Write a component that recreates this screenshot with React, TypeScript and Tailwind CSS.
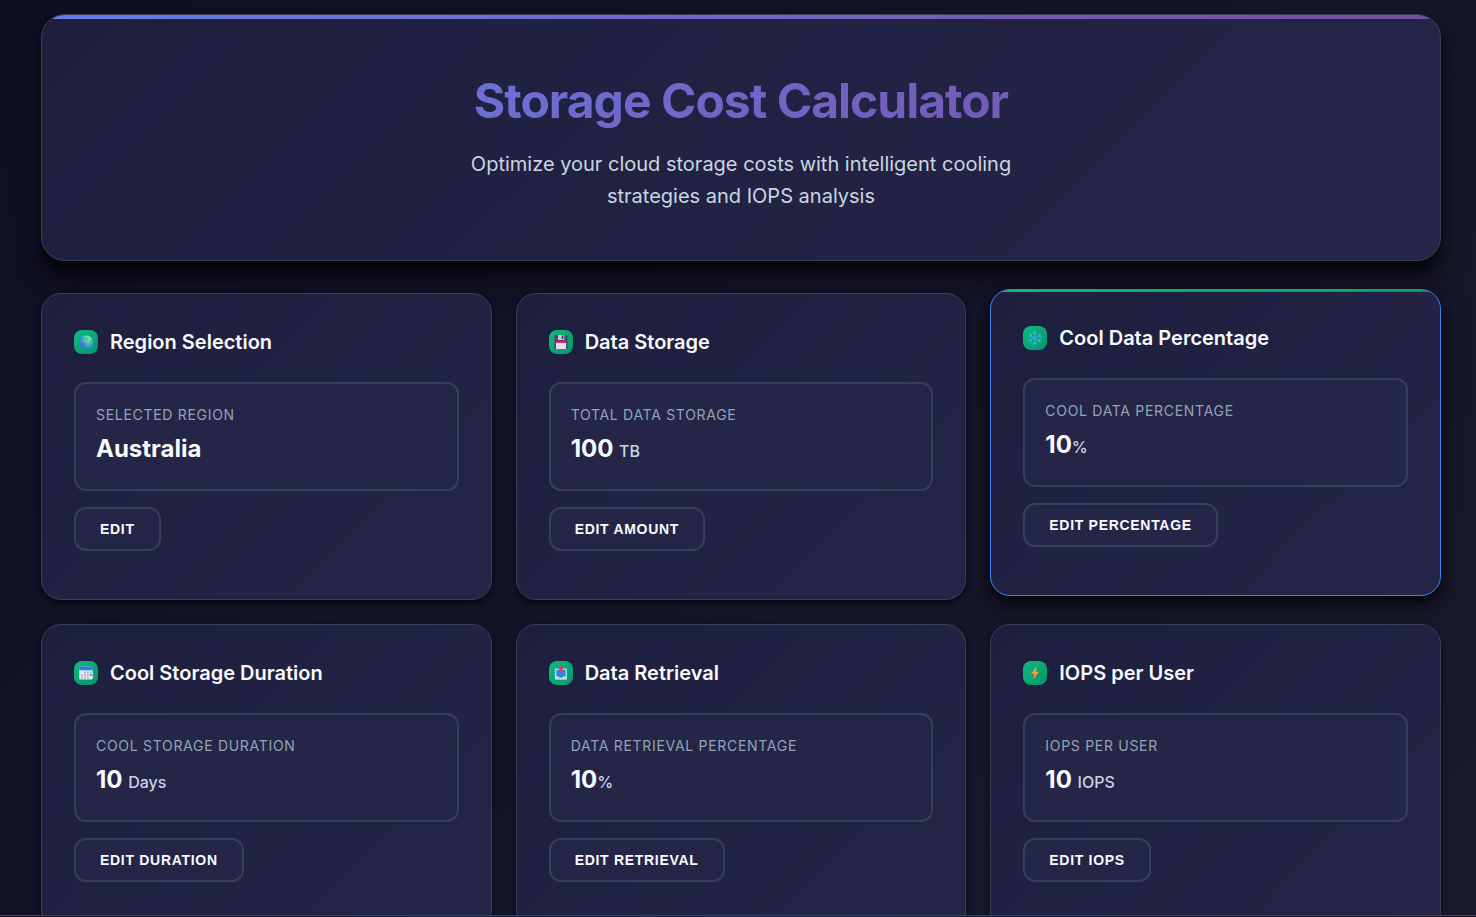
import React from "react";

type IconName = "globe" | "floppy" | "snow" | "calendar" | "outbox" | "bolt";

type CardData = {
  title: string;
  icon: IconName;
  label: string;
  value: string;
  unit?: string;
  spaced?: boolean;
  action: string;
  active?: boolean;
};

const cards: CardData[] = [
  { title: "Region Selection", icon: "globe", label: "Selected Region", value: "Australia", action: "Edit" },
  { title: "Data Storage", icon: "floppy", label: "Total Data Storage", value: "100", unit: "TB", spaced: true, action: "Edit Amount" },
  { title: "Cool Data Percentage", icon: "snow", label: "Cool Data Percentage", value: "10", unit: "%", action: "Edit Percentage", active: true },
  { title: "Cool Storage Duration", icon: "calendar", label: "Cool Storage Duration", value: "10", unit: "Days", spaced: true, action: "Edit Duration" },
  { title: "Data Retrieval", icon: "outbox", label: "Data Retrieval Percentage", value: "10", unit: "%", action: "Edit Retrieval" },
  { title: "IOPS per User", icon: "bolt", label: "IOPS per User", value: "10", unit: "IOPS", spaced: true, action: "Edit IOPS" },
];

function Glyph({ name }: { name: IconName }) {
  return (
    <svg viewBox="0 0 16 16" className="size-4" aria-hidden="true">
      {name === "globe" && (
        <>
          <defs>
            <linearGradient id="sea" x1="1" y1="0" x2="0" y2="1">
              <stop offset="0" stopColor="#38c5f0" />
              <stop offset="1" stopColor="#4560d8" />
            </linearGradient>
            <linearGradient id="land" x1="1" y1="0" x2="0" y2="1">
              <stop offset="0" stopColor="#7dfba2" />
              <stop offset="1" stopColor="#35a56e" />
            </linearGradient>
          </defs>
          <circle cx="8" cy="8" r="7" fill="url(#sea)" />
          <path d="M4.5 3.4 6.4 2.2l2.4-.4 2.2.5L13.3 4l.8 2.6-1.5-.5-.9 1.2 1 .8-1.2 1.3-.8 2.2-1.4 1.2-1.2-1.3.2-1.8-1.2-1-1.8.1-1.4-1.6.7-1.8 1.8-.8z" fill="url(#land)" />
          <path d="m6.5 4.6 1.8-.7 1.6.8-.7.8-1.6-.2z" fill="#3ba9d8" />
        </>
      )}
      {name === "floppy" && (
        <>
          <path d="M2 1h11l1.5 1.5V15H1.5V1.5z" fill="#56406e" />
          <path d="M5 1h6.3v5H5z" fill="#c9c5d8" />
          <path d="M8.8 1.6h1.5v3.5H8.8z" fill="#332c50" />
          <path d="M3 8h10v7H3z" fill="#e4e0ef" />
          <path d="M3 7.5h10V9H3z" fill="#f42f55" />
        </>
      )}
      {name === "snow" && (
        <g fill="none" stroke="#3cb0f2" strokeWidth="1.05" strokeLinecap="round" strokeLinejoin="round">
          <path d="M8 1.3v13.4M2.2 4.65l11.6 6.7M13.8 4.65l-11.6 6.7" />
          <path d="M6.2 2.2 8 4l1.8-1.8M6.2 13.8 8 12l1.8 1.8M2 6.8l2.5-.7-.7-2.5M14 9.2l-2.5.7.7 2.5M2 9.2l2.5.7-.7 2.5M14 6.8l-2.5-.7.7-2.5" />
        </g>
      )}
      {name === "calendar" && (
        <>
          <rect x="1.2" y="1.5" width="13.6" height="13" rx="1.5" fill="#e6e7ef" />
          <path d="M1.2 5.2V3q0-1.5 1.5-1.5h10.6q1.5 0 1.5 1.5v2.2z" fill="#2583e0" />
          <g fill="#a3afc0">
            <path d="M6 6.5h2v1.7H6zM9 6.5h1.8v1.7H9zM12 6.5h1.6v1.7H12zM3 9.2h2v1.6H3zM6 9.2h2v1.6H6zM9 9.2h1.8v1.6H9zM3 11.8h2v1.6H3zM6 11.8h2v1.6H6zM9 11.8h1.8v1.6H9z" />
          </g>
          <path d="M11.8 9.2h2v1.6h-2z" fill="#2485e0" />
        </>
      )}
      {name === "outbox" && (
        <>
          <path d="M3 3.5h10q.9 0 .9 1v9q0 1.3-1.3 1.3H3.2q-1.3 0-1.3-1.3v-9q0-1 1.1-1z" fill="#ccd5e4" />
          <path d="M3.4 4.8h9.2v6.4h-2l-1 1.3H6.3l-1-1.3H3.4z" fill="#248be0" />
          <path d="M8 .6 10.8 4H9.3v3.4H6.7V4H5.2z" fill="#e53863" />
        </>
      )}
      {name === "bolt" && (
        <>
          <defs>
            <linearGradient id="spark" x1="0" y1="0" x2="0" y2="1">
              <stop offset="0" stopColor="#ff8a50" />
              <stop offset=".5" stopColor="#ffa046" />
              <stop offset="1" stopColor="#f0604a" />
            </linearGradient>
          </defs>
          <path d="M9.8 1 4 8.8h3.2L5.8 15.2 12 6.8H8.8z" fill="url(#spark)" />
        </>
      )}
    </svg>
  );
}

function SettingCard({ card }: { card: CardData }) {
  return (
    <section
      className={
        card.active
          ? "relative -translate-y-1 overflow-hidden rounded-[20px] border border-[#3b82f6] bg-linear-135 from-[#1e1e3f] to-[#252547] px-8 pt-8 pb-12 shadow-[0_10px_25px_rgba(0,0,0,0.5),0_4px_10px_rgba(0,0,0,0.6)]"
          : "relative overflow-hidden rounded-[20px] border border-[#334155] bg-linear-135 from-[#1e1e3f] to-[#252547] px-8 pt-8 pb-12 shadow-[0_4px_6px_rgba(0,0,0,0.4),0_2px_4px_rgba(0,0,0,0.3)]"
      }
    >
      {card.active && <div className="absolute inset-x-0 top-0 h-0.5 bg-linear-135 from-[#10b981] to-[#059669]" />}
      <h2 className="mb-6 flex items-center gap-3 text-xl leading-8 font-semibold text-[#f8fafc]">
        <span className="flex size-6 shrink-0 items-center justify-center rounded-lg bg-linear-135 from-[#10b981] to-[#059669]">
          <Glyph name={card.icon} />
        </span>
        {card.title}
      </h2>
      <div className="mb-4 rounded-xl border-2 border-[#334155] bg-[#252547] px-5 pt-5 pb-[26px]">
        <div className="mb-2 text-sm leading-[22px] tracking-wider text-[#94a3b8] uppercase">{card.label}</div>
        <div className="text-2xl leading-[29px] font-bold text-[#f8fafc]">
          {card.value}
          {card.spaced && " "}
          {card.unit && <span className="text-base leading-none font-medium text-[#cbd5e1]">{card.unit}</span>}
        </div>
      </div>
      <button
        type="button"
        className="flex h-11 cursor-pointer items-center rounded-xl border-2 border-[#334155] bg-[#252547] px-6 font-['Liberation_Sans',sans-serif] text-sm font-semibold tracking-wider text-[#f8fafc] uppercase"
      >
        {card.action}
      </button>
    </section>
  );
}

export default function App() {
  return (
    <div className="relative h-screen overflow-hidden bg-linear-135 from-[#0f0f23] to-[#1a1a2e] font-[Inter,sans-serif] text-[#f8fafc]">
      <main className="mx-auto max-w-[1480px] pt-3.5 pr-[35px] pl-[41px]">
        <header className="relative mb-8 overflow-hidden rounded-3xl border border-[#334155] bg-linear-135 from-[#1e1e3f] to-[#252547] px-8 py-12 text-center shadow-[0_20px_25px_rgba(0,0,0,0.4),0_10px_10px_rgba(0,0,0,0.5)]">
          <div className="absolute inset-x-0 top-0 h-1 bg-linear-135 from-[#667eea] to-[#764ba2]" />
          <h1 className="mb-2.5 bg-linear-135 from-[#667eea] to-[#764ba2] bg-clip-text text-5xl leading-[75px] font-bold tracking-[-1px] text-transparent">
            Storage Cost Calculator
          </h1>
          <p className="mx-auto max-w-[600px] text-xl leading-8 text-[#cbd5e1]">
            Optimize your cloud storage costs with intelligent cooling strategies and IOPS analysis
          </p>
        </header>
        <div className="grid grid-cols-3 gap-6">
          {cards.map((card) => (
            <SettingCard key={card.title} card={card} />
          ))}
        </div>
      </main>
      <footer className="absolute inset-x-0 bottom-0 h-0.5 border-t border-[#3c4257] bg-linear-to-r from-[#1c1a24] via-[#1a1f55] to-[#1c1a24]" />
    </div>
  );
}
